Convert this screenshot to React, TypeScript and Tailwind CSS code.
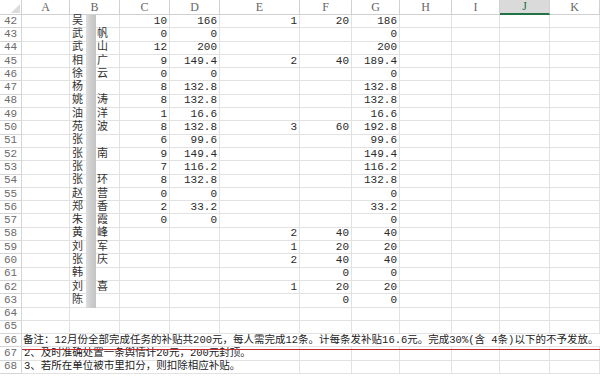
import React from "react";

type Row = [number, string, string, string, string, string, string, string];

const rows: Row[] = [
  [42, "吴", "", "10", "166", "1", "20", "186"],
  [43, "武", "帆", "0", "0", "", "", "0"],
  [44, "武", "山", "12", "200", "", "", "200"],
  [45, "相", "广", "9", "149.4", "2", "40", "189.4"],
  [46, "徐", "云", "0", "0", "", "", "0"],
  [47, "杨", "", "8", "132.8", "", "", "132.8"],
  [48, "姚", "涛", "8", "132.8", "", "", "132.8"],
  [49, "油", "洋", "1", "16.6", "", "", "16.6"],
  [50, "苑", "波", "8", "132.8", "3", "60", "192.8"],
  [51, "张", "", "6", "99.6", "", "", "99.6"],
  [52, "张", "南", "9", "149.4", "", "", "149.4"],
  [53, "张", "", "7", "116.2", "", "", "116.2"],
  [54, "张", "环", "8", "132.8", "", "", "132.8"],
  [55, "赵", "营", "0", "0", "", "", "0"],
  [56, "郑", "香", "2", "33.2", "", "", "33.2"],
  [57, "朱", "霞", "0", "0", "", "", "0"],
  [58, "黄", "峰", "", "", "2", "40", "40"],
  [59, "刘", "军", "", "", "1", "20", "20"],
  [60, "张", "庆", "", "", "2", "40", "40"],
  [61, "韩", "", "", "", "", "0", "0"],
  [62, "刘", "喜", "", "", "1", "20", "20"],
  [63, "陈", "", "", "", "", "0", "0"],
];

const cols = ["A", "B", "C", "D", "E", "F", "G", "H", "I", "J", "K"];

const cell = "border-r border-b border-[#e2e2e2] flex items-center overflow-visible whitespace-nowrap";
const num = cell + " justify-end pr-[2px] text-[#2a2a2a]";
const rowHead =
  "border-r border-b border-[#d6d6d6] flex items-center justify-center text-[#6b6b6b] text-[11px]";

function NumRow({ r }: { r: Row }) {
  return (
    <>
      <div className={rowHead}>{r[0]}</div>
      <div className={cell} />
      <div className={cell + " pl-[2px] text-[#333]"}>
        <span>{r[1]}</span>
        <span className="ml-[14px]">{r[2]}</span>
      </div>
      <div className={num}>{r[3]}</div>
      <div className={num}>{r[4]}</div>
      <div className={num}>{r[5]}</div>
      <div className={num}>{r[6]}</div>
      <div className={num}>{r[7]}</div>
      <div className={cell} />
      <div className={cell} />
      <div className={cell} />
      <div className={cell} />
    </>
  );
}

function EmptyRow({ n }: { n: number }) {
  return (
    <>
      <div className={rowHead}>{n}</div>
      {cols.map((c) => (
        <div key={c} className={cell} />
      ))}
    </>
  );
}

export default function App() {
  return (
    <div className="relative w-[600px] h-[378px] overflow-hidden bg-white font-['Liberation_Mono','Noto_Sans_CJK_SC',monospace] text-[11px] leading-[13px]">
      <div className="grid grid-cols-[22px_48px_50px_50px_50px_80px_52px_48px_52px_48px_50px_50px] grid-rows-[15px] auto-rows-[13.3px]">
        {/* header */}
        <div className="relative border-r border-b border-[#d0d0d0]">
          <svg className="absolute right-[1px] bottom-[1px]" width="9" height="9" viewBox="0 0 9 9">
            <polygon points="9,0 9,9 0,9" fill="#dcdcdc" />
          </svg>
        </div>
        {cols.map((c) =>
          c === "J" ? (
            <div
              key={c}
              className="border-r border-b-2 border-r-[#d0d0d0] border-b-[#217346] bg-[#dadada] flex items-center justify-center text-[#217346] font-['Liberation_Serif',serif] text-[12px]"
            >
              {c}
            </div>
          ) : (
            <div
              key={c}
              className="border-r border-b border-[#d0d0d0] flex items-center justify-center text-[#666] font-['Liberation_Serif',serif] text-[12px]"
            >
              {c}
            </div>
          )
        )}

        {rows.map((r) => (
          <NumRow key={r[0]} r={r} />
        ))}
        <EmptyRow n={64} />
        <EmptyRow n={65} />

        {/* row 66 */}
        <div className={rowHead}>66</div>
        <div className="col-span-11 border-b border-[#e2e2e2] flex items-center pl-[1px] whitespace-nowrap text-[#222] text-[10.5px]">
          备注：12月份全部完成任务的补贴共200元，每人需完成12条。计每条发补贴16.6元。完成30%(含 4条)以下的不予发放。
        </div>

        {/* row 67 */}
        <div className={rowHead}>67</div>
        <div className="col-span-5 border-r border-b border-[#e2e2e2] flex items-center pl-[2px] whitespace-nowrap text-[#222] text-[10.5px]">
          2、及时准确处置一条舆情计20元，200元封顶。
        </div>
        {cols.slice(5).map((c) => (
          <div key={c} className={cell} />
        ))}

        {/* row 68 */}
        <div className={rowHead}>68</div>
        <div className="col-span-5 border-r border-b border-[#e2e2e2] flex items-center pl-[2px] whitespace-nowrap text-[#222] text-[10.5px]">
          3、若所在单位被市里扣分，则扣除相应补贴。
        </div>
        {cols.slice(5).map((c) => (
          <div key={c} className={cell} />
        ))}
      </div>

      {/* blurred privacy strip */}
      <div className="absolute left-[86px] top-[15px] w-[10px] h-[293px] bg-gradient-to-r from-[#dedede] via-[#cdcdcd] to-[#c4c4c4] blur-[0.6px]" />

      {/* red underline annotation */}
      <div className="absolute left-[22px] top-[348.5px] w-[578px] h-[1.5px] bg-[#c42a30]" />
    </div>
  );
}
